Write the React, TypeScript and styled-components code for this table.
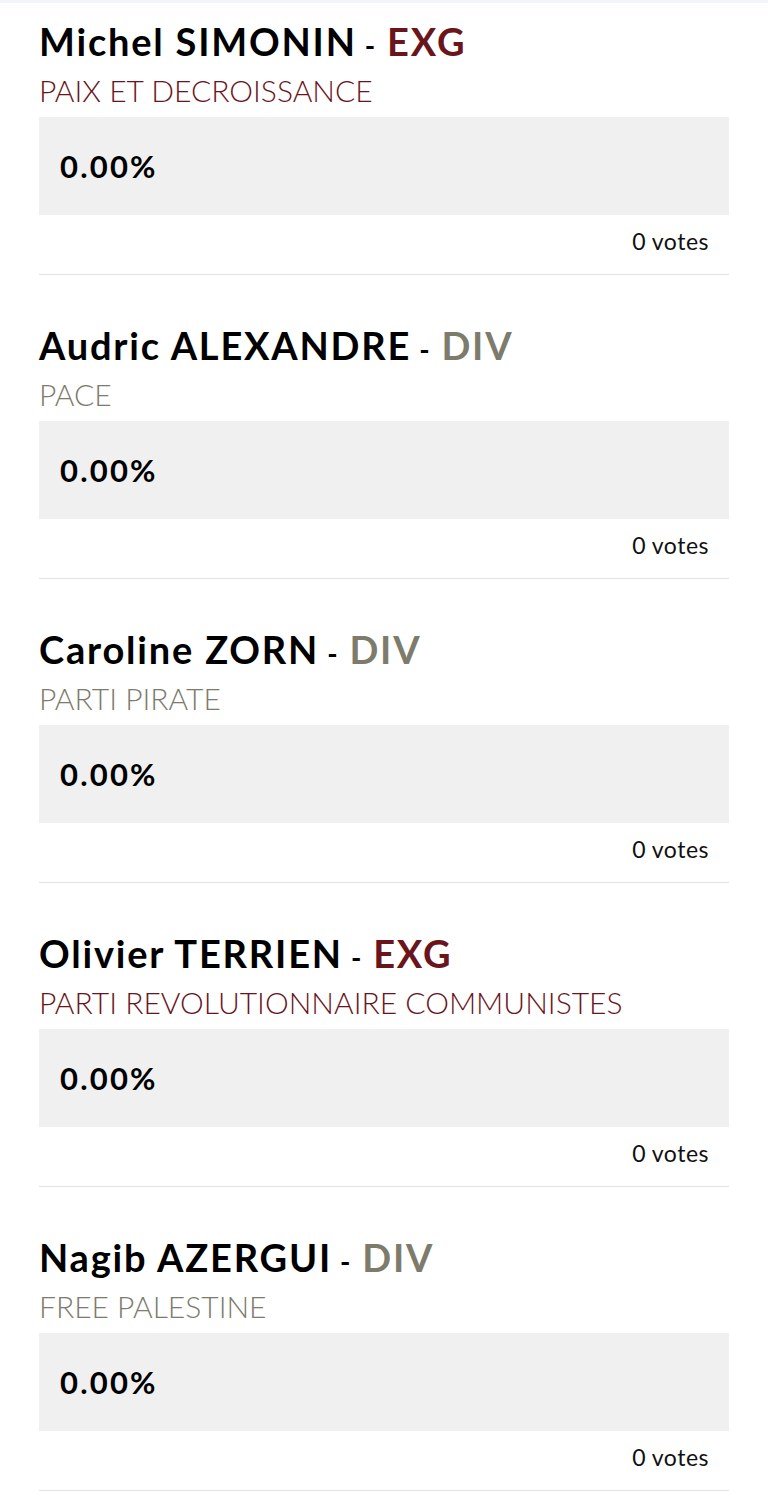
import styled, { createGlobalStyle } from 'styled-components';

const GlobalStyle = createGlobalStyle`
    body {
        margin: 0;
        background: #ffffff;
        font-family: 'Lato', 'Liberation Sans', sans-serif;
    }
`;

const Page = styled.div`
    border-top: 3px solid #f3f4f8;
    padding: 0 39px;
`;

const Candidate = styled.section`
    padding-top: 16px;
    border-bottom: 1px solid #e2e2e2;
    margin-bottom: 32px;
`;

const Name = styled.h2`
    margin: 0;
    font-size: 38px;
    line-height: 44px;
    font-weight: 700;
    letter-spacing: 1.8px;
    color: #000000;
`;

const Nuance = styled.span<{ $tone: string }>`
    color: ${(p) => p.$tone};
`;

const Dash = styled.span`
    font-size: 28px;
    margin: 0 10px 0 8px;
`;

const Party = styled.div<{ $tone: string }>`
    font-size: 30px;
    line-height: 40px;
    font-weight: 300;
    color: ${(p) => p.$tone};
    text-transform: uppercase;
    padding-top: 3px;
    margin-bottom: 7px;
`;

const Bar = styled.div`
    height: 98px;
    background: #f0f0f0;
    display: flex;
    align-items: center;
    padding-left: 21px;
    font-size: 31px;
    font-weight: 700;
    letter-spacing: 2.2px;
    color: #000000;
`;

const Votes = styled.div`
    text-align: right;
    padding: 12px 20px 19px 0;
    font-size: 23px;
    line-height: 28px;
    letter-spacing: 0.5px;
    color: #111111;
`;

const tones: Record<string, string> = {
    EXG: '#6a141c',
    DIV: '#7c7b6c',
};

const candidates = [
    { name: 'Michel SIMONIN', nuance: 'EXG', party: 'PAIX ET DECROISSANCE' },
    { name: 'Audric ALEXANDRE', nuance: 'DIV', party: 'PACE' },
    { name: 'Caroline ZORN', nuance: 'DIV', party: 'PARTI PIRATE' },
    { name: 'Olivier TERRIEN', nuance: 'EXG', party: 'PARTI REVOLUTIONNAIRE COMMUNISTES' },
    { name: 'Nagib AZERGUI', nuance: 'DIV', party: 'FREE PALESTINE' },
];

export default function App() {
    return (
        <>
            <GlobalStyle />
            <Page>
                {candidates.map((c) => (
                    <Candidate key={c.name}>
                        <Name>
                            {c.name}
                            <Dash>-</Dash>
                            <Nuance $tone={tones[c.nuance]}>{c.nuance}</Nuance>
                        </Name>
                        <Party $tone={tones[c.nuance]}>{c.party}</Party>
                        <Bar>0.00%</Bar>
                        <Votes>0 votes</Votes>
                    </Candidate>
                ))}
            </Page>
        </>
    );
}
